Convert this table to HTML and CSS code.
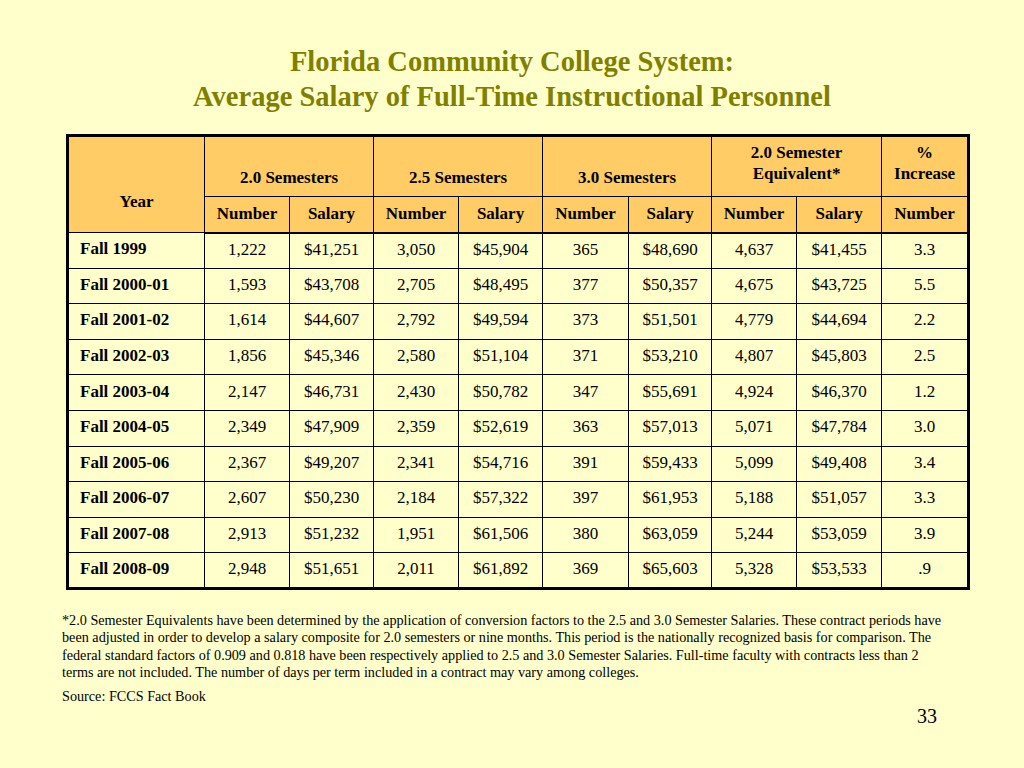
FILE: index.html
```html
<!DOCTYPE html>
<html>
<head>
<meta charset="utf-8">
<link rel="stylesheet" href="styles.css">
</head>
<body>
<div class="slide">
  <h1 class="title">Florida Community College System:<br>Average Salary of Full-Time Instructional Personnel</h1>
  <table class="data">
    <colgroup>
      <col class="c-year"><col class="c85"><col class="c84"><col class="c85"><col class="c84"><col class="c86"><col class="c83"><col class="c85"><col class="c85"><col class="c87">
    </colgroup>
    <thead>
      <tr class="h1">
        <th rowspan="2" class="year-h">Year</th>
        <th colspan="2" class="grp">2.0 Semesters</th>
        <th colspan="2" class="grp">2.5 Semesters</th>
        <th colspan="2" class="grp">3.0 Semesters</th>
        <th colspan="2" class="top">2.0 Semester<br>Equivalent*</th>
        <th class="top">%<br>Increase</th>
      </tr>
      <tr class="h2">
        <th>Number</th><th>Salary</th><th>Number</th><th>Salary</th><th>Number</th><th>Salary</th><th>Number</th><th>Salary</th><th>Number</th>
      </tr>
    </thead>
    <tbody>
      <tr><td class="yr">Fall 1999</td><td>1,222</td><td>$41,251</td><td>3,050</td><td>$45,904</td><td>365</td><td>$48,690</td><td>4,637</td><td>$41,455</td><td>3.3</td></tr>
      <tr><td class="yr">Fall 2000-01</td><td>1,593</td><td>$43,708</td><td>2,705</td><td>$48,495</td><td>377</td><td>$50,357</td><td>4,675</td><td>$43,725</td><td>5.5</td></tr>
      <tr><td class="yr">Fall 2001-02</td><td>1,614</td><td>$44,607</td><td>2,792</td><td>$49,594</td><td>373</td><td>$51,501</td><td>4,779</td><td>$44,694</td><td>2.2</td></tr>
      <tr><td class="yr">Fall 2002-03</td><td>1,856</td><td>$45,346</td><td>2,580</td><td>$51,104</td><td>371</td><td>$53,210</td><td>4,807</td><td>$45,803</td><td>2.5</td></tr>
      <tr><td class="yr">Fall 2003-04</td><td>2,147</td><td>$46,731</td><td>2,430</td><td>$50,782</td><td>347</td><td>$55,691</td><td>4,924</td><td>$46,370</td><td>1.2</td></tr>
      <tr><td class="yr">Fall 2004-05</td><td>2,349</td><td>$47,909</td><td>2,359</td><td>$52,619</td><td>363</td><td>$57,013</td><td>5,071</td><td>$47,784</td><td>3.0</td></tr>
      <tr><td class="yr">Fall 2005-06</td><td>2,367</td><td>$49,207</td><td>2,341</td><td>$54,716</td><td>391</td><td>$59,433</td><td>5,099</td><td>$49,408</td><td>3.4</td></tr>
      <tr><td class="yr">Fall 2006-07</td><td>2,607</td><td>$50,230</td><td>2,184</td><td>$57,322</td><td>397</td><td>$61,953</td><td>5,188</td><td>$51,057</td><td>3.3</td></tr>
      <tr><td class="yr">Fall 2007-08</td><td>2,913</td><td>$51,232</td><td>1,951</td><td>$61,506</td><td>380</td><td>$63,059</td><td>5,244</td><td>$53,059</td><td>3.9</td></tr>
      <tr><td class="yr">Fall 2008-09</td><td>2,948</td><td>$51,651</td><td>2,011</td><td>$61,892</td><td>369</td><td>$65,603</td><td>5,328</td><td>$53,533</td><td>.9</td></tr>
    </tbody>
  </table>
  <div class="notes">
    <p class="foot">*2.0 Semester Equivalents have been determined by the application of conversion factors to the 2.5 and 3.0 Semester Salaries. These contract periods have been adjusted in order to develop a salary composite for 2.0 semesters or nine months. This period is the nationally recognized basis for comparison. The federal standard factors of 0.909 and 0.818 have been respectively applied to 2.5 and 3.0 Semester Salaries. Full-time faculty with contracts less than 2 terms are not included. The number of days per term included in a contract may vary among colleges.</p>
    <p class="source">Source: FCCS Fact Book</p>
  </div>
  <div class="pagenum">33</div>
</div>
</body>
</html>
```

FILE: styles.css
```css
html, body {
  margin: 0;
  padding: 0;
  background: #ffffcc;
}
body {
  font-family: "Liberation Serif", "Times New Roman", serif;
  color: #000;
}
.slide {
  width: 1024px;
  height: 768px;
  box-sizing: border-box;
  padding-top: 44px;
  display: flex;
  flex-direction: column;
}
.title {
  margin: 0;
  text-align: center;
  font-size: 28.5px;
  line-height: 35px;
  font-weight: bold;
  color: #808000;
}
.data {
  margin: 20px 0 0 66px;
  width: 901px;
  border-collapse: collapse;
  table-layout: fixed;
  border: 3px solid #000;
  font-size: 17px;
}
.c-year { width: 137px; }
.c85 { width: 85px; }
.c84 { width: 84px; }
.c86 { width: 86px; }
.c83 { width: 83px; }
.c87 { width: 87px; }
.data th, .data td {
  border: 1px solid #000;
  text-align: center;
  padding: 0;
  box-sizing: border-box;
}
.data th {
  background: #ffcc66;
  font-weight: bold;
  line-height: 21px;
}
.h1 { height: 61px; }
.h1 th { vertical-align: top; }
.h1 th.year-h { padding-top: 54px; }
.h1 th.grp { padding-top: 30px; }
.h1 th.top { padding-top: 5px; }
.h2 { height: 36px; }
.h2 th { vertical-align: middle; padding-bottom: 1px; }
.data thead tr.h2 th { border-bottom: 2px solid #000; }
.data tbody tr { height: 35.6px; }
.data td { vertical-align: middle; padding-bottom: 2px; }
.data td.yr {
  text-align: left;
  padding-left: 11px;
  font-weight: bold;
}
.notes {
  margin: 22px 0 0 62px;
  width: 888px;
  font-size: 14.2px;
  line-height: 17.3px;
}
.notes p { margin: 0; }
.notes .source { margin-top: 7px; }
.pagenum {
  margin: 0 0 0 917px;
  font-size: 20px;
}
```
